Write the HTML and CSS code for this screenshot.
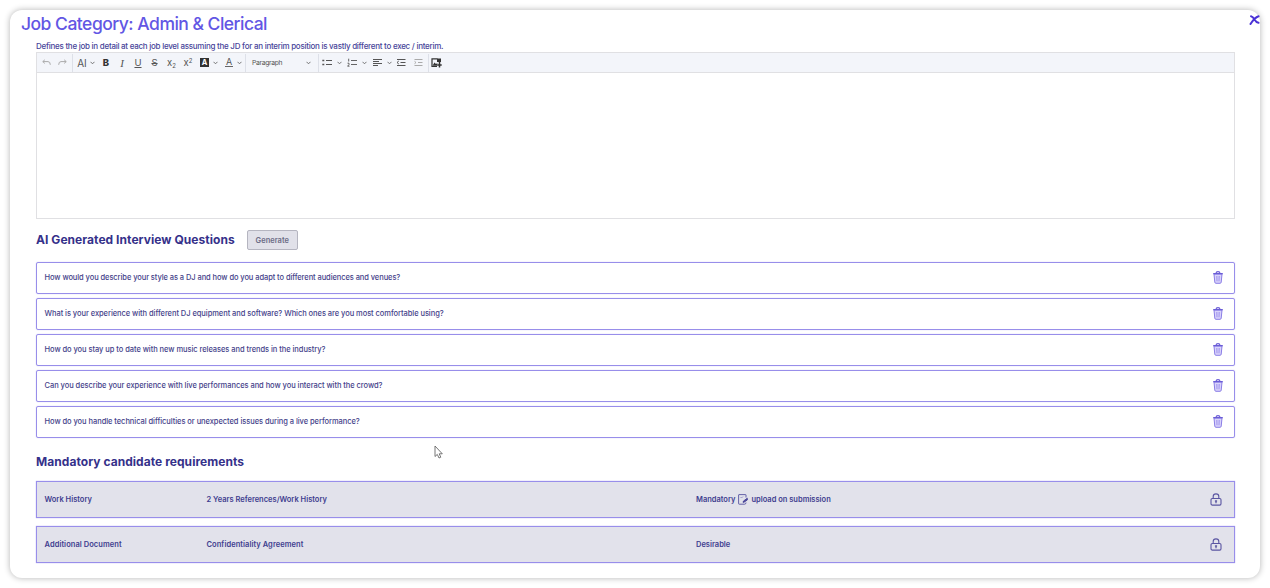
FILE: index.html
```html
<!DOCTYPE html>
<html lang="en">
<head>
<meta charset="utf-8">
<title>Job Category: Admin &amp; Clerical</title>
<link rel="stylesheet" href="styles.css">
</head>
<body>
<svg class="defs" width="0" height="0" aria-hidden="true">
  <symbol id="chev" viewBox="0 0 5 4"><path d="M.5 .8 2.5 2.8 4.500 .8" fill="none" stroke="currentColor" stroke-width=".9"/></symbol>
  <symbol id="trash" viewBox="0 0 10 13"><path d="M1 3 1.800 11.200Q1.900 12.300 3 12.300H7Q8.100 12.300 8.200 11.200L9 3Z" fill="#d9d3fb" stroke="#8a7de6"/><path d="M.2 2.700H9.800M3 2.300Q3.200.7 5 .7 6.800.7 7 2.300" fill="none" stroke="#6a5cd6" stroke-width="1.200"/><path d="M3.500 5 3.800 10.300M6.500 5 6.200 10.300M5 5V10.300" stroke="#9c90ec" stroke-width=".7"/></symbol>
  <symbol id="lock" viewBox="0 0 12 13"><path d="M3.200 5.500V3.500Q3.200.9 6 .9 8.800.9 8.800 3.500V5.500" fill="none" stroke="#5a55a2" stroke-width="1.100"/><rect x="1" y="5.500" width="10" height="6.600" rx="1.300" fill="none" stroke="#5a55a2" stroke-width="1.100"/><path d="M6 7.300V10.300M4.900 8H7.100" stroke="#4a4598" stroke-width="1.100"/></symbol>
</svg>
<main class="card">
  <header class="head">
    <h1 class="title">Job Category: Admin &amp; Clerical</h1>
    <svg class="close" viewBox="0 0 11 10"><path d="M2 1.200Q3.800 1.600 5.500 4.500T9.500 7.800M9.600 1.200Q5.500 2.500 1.500 9" fill="none" stroke="#4a32d6" stroke-width="2" stroke-linecap="round"/></svg>
  </header>
  <div class="body">
    <p class="hint">Defines the job in detail at each job level assuming the JD for an interim position is vastly different to exec / interim.</p>
    <section class="editor">
      <div class="toolbar">
        <span class="tool faint"><svg width="9" height="7" viewBox="0 0 9 7"><path d="M2.800.8.800 2.600 2.800 4.400M.8 2.600H6Q8.300 2.600 8.300 5.800" fill="none" stroke="currentColor"/></svg></span>
        <span class="tool faint"><svg width="9" height="7" viewBox="0 0 9 7"><path d="M6.200.8 8.200 2.600 6.200 4.400M8.200 2.600H3Q.7 2.600.7 5.800" fill="none" stroke="currentColor"/></svg></span>
        <i class="sep"></i>
        <span class="tool ai">AI</span><svg class="chev"><use href="#chev"/></svg>
        <span class="tool bold">B</span>
        <span class="tool italic">I</span>
        <span class="tool under">U</span>
        <span class="tool wide strike">S</span>
        <span class="tool wide">x<sub>2</sub></span>
        <span class="tool">x<sup>2</sup></span>
        <span class="tool fill"><b class="swatch">A</b></span><svg class="chev"><use href="#chev"/></svg>
        <span class="tool color"><b class="ink">A</b></span><svg class="chev"><use href="#chev"/></svg>
        <i class="sep"></i>
        <span class="style"><span class="style-name">Paragraph</span><svg class="chev"><use href="#chev"/></svg></span>
        <i class="sep"></i>
        <span class="tool bullets"><svg width="10" height="7" viewBox="0 0 10 7"><path d="M4 1.500H10M4 5.500H10" stroke="currentColor"/><path d="M.3 1.500H2.300M.3 5.500H2.300" stroke="currentColor" stroke-width="1.700"/></svg></span><svg class="chev apart"><use href="#chev"/></svg>
        <span class="tool list"><svg width="10" height="9" viewBox="0 0 10 9"><path d="M4 2.500H10M4 6.500H10M1.700.7V3.500M.5 5.200H2V6.600L.6 8.200H2.500" fill="none" stroke="currentColor" stroke-width=".9"/></svg></span><svg class="chev apart"><use href="#chev"/></svg>
        <span class="tool list"><svg width="9" height="8" viewBox="0 0 9 8"><path d="M0 .5H9M0 2.500H6M0 4.500H9M0 6.500H5" stroke="currentColor"/></svg></span><svg class="chev apart"><use href="#chev"/></svg>
        <span class="tool indent"><svg width="10" height="8" viewBox="0 0 10 8"><path d="M1 .5H9.500M4.500 3.500H9.500M1 6.500H9.500M2.800 2 1 3.500 2.800 5" fill="none" stroke="currentColor"/></svg></span>
        <span class="tool indent faint"><svg width="9" height="8" viewBox="0 0 9 8"><path d="M.5 .5H8.500M4 3.500H8.500M.5 6.500H8.500M.5 2.300 2 3.500 .5 4.700" fill="none" stroke="currentColor"/></svg></span>
        <i class="sep"></i>
        <span class="tool image"><svg width="11" height="10" viewBox="0 0 11 10"><path d="M6.500 .9H1V8.500H6" fill="none" stroke="#333" stroke-width="1.200"/><path d="M1.500 7.800 3.500 4.500 5 6 6.300 5V7.800ZM6 .5H10V4H6Z" fill="#333"/><path d="M8.500 4V9.500M6.300 7H10.700" stroke="#333" stroke-width="1.500"/></svg></span>
      </div>
      <div class="area"></div>
    </section>
    <div class="heading">
      <h2 class="h2 h2-ai">AI Generated Interview Questions</h2>
      <button class="generate">Generate</button>
    </div>
    <ul class="questions">
      <li class="question"><span class="snug">How would you describe your style as a DJ and how do you adapt to different audiences and venues?</span><svg class="trash"><use href="#trash"/></svg></li>
      <li class="question"><span>What is your experience with different DJ equipment and software? Which ones are you most comfortable using?</span><svg class="trash"><use href="#trash"/></svg></li>
      <li class="question"><span>How do you stay up to date with new music releases and trends in the industry?</span><svg class="trash"><use href="#trash"/></svg></li>
      <li class="question"><span>Can you describe your experience with live performances and how you interact with the crowd?</span><svg class="trash"><use href="#trash"/></svg></li>
      <li class="question"><span>How do you handle technical difficulties or unexpected issues during a live performance?</span><svg class="trash"><use href="#trash"/></svg></li>
    </ul>
    <h2 class="h2 h2-req">Mandatory candidate requirements</h2>
    <div class="requirements">
      <div class="req"><span>Work History</span><span>2 Years References/Work History</span><span class="status">Mandatory <svg class="doc" viewBox="0 0 10 11"><path d="M8 3.500V1Q8 .6 7.600.6H1Q.6.6.6 1V9.600Q.6 10.200 1.200 10.200H6.600Q8 10.200 8 8.500" fill="none" stroke="#5752a0" stroke-width=".9"/><path d="M2.500 3 3.500 4 5 2.500" fill="none" stroke="#8a86c0" stroke-width=".8"/><path d="M9.300 4.200V6L6 8.200 5 8.300 5.500 7Z" fill="#5752a0" stroke="#3a3590" stroke-width=".8"/></svg> upload on submission</span><svg class="lock"><use href="#lock"/></svg></div>
      <div class="req"><span class="loose">Additional Document</span><span class="loose">Confidentiality Agreement</span><span class="status">Desirable</span><svg class="lock"><use href="#lock"/></svg></div>
    </div>
  </div>
</main>
<svg class="cursor" viewBox="0 0 9 14"><path d="M1 1V11.500L3.300 9.400 5 13 6.800 12.200 5.200 8.800H8.300Z" fill="#fff" stroke="#666" stroke-width=".9"/></svg>
</body>
</html>
```
FILE: styles.css
```css
* { box-sizing: border-box; }
body {
  margin: 0;
  padding: 10px;
  height: 588px;
  overflow: hidden;
  background: #fff;
  font-family: Inter, "Liberation Sans", sans-serif;
  color: #35318a;
}
svg { display: block; flex: none; }
.defs { position: absolute; }
.card {
  height: 568px;
  width: 1250px;
  border-radius: 12px;
  background: #fff;
  box-shadow: 0 0 6px rgba(0, 0, 0, .3);
}
.head { display: flex; justify-content: space-between; height: 30px; padding-left: 11px; }
.title { margin: 0; font-size: 17.5px; line-height: 28px; font-weight: 500; color: #6256e4; white-space: nowrap; letter-spacing: -.51px; }
.close { width: 11px; height: 10px; margin: 5px 0 0; }
.body { padding: 0 25px 0 26px; }
.hint { margin: 0; height: 12px; font-size: 8px; line-height: 12px; font-weight: 500; white-space: nowrap; color: #48459a; letter-spacing: -.262px; }

.editor { height: 167px; border: 1px solid #e0e0e3; }
.toolbar {
  display: flex;
  align-items: center;
  height: 20px;
  padding-left: 1px;
  background: #f3f5fa;
  border-bottom: 1px solid #e0e0e3;
  color: #555;
  font-size: 9.5px;
}
.tool { display: flex; align-items: center; justify-content: center; width: 16px; height: 18px; flex: none; }
.faint { color: #aaa; }
.sep { width: 1px; height: 18px; margin: 0 1px 0 2px; background: #dde0e8; flex: none; }
.chev { width: 5px; height: 4px; color: #666; }
.apart { margin-left: 2px; }
.list { margin-left: 2px; }
.ai { font-size: 10px; }
.bold { margin-left: 3px; font-weight: 800; color: #333; }
.italic { font-family: "Liberation Serif", serif; font-style: italic; font-size: 11px; }
.under { text-decoration: underline; }
.wide { width: 17px; }
.strike { text-decoration: line-through; }
.tool sub, .tool sup { font-size: 6px; line-height: 1; }
.tool sub { margin-top: 6px; }
.tool sup { margin-bottom: 4px; }
.fill { width: 17px; }
.swatch { width: 9px; height: 9px; background: #333; color: #fff; font-size: 7.5px; line-height: 9px; text-align: center; }
.color { margin-left: 3px; }
.ink { width: 8px; font-weight: 400; font-size: 9px; line-height: 8px; text-align: center; border-bottom: 1px solid #666; }
.color + .chev { margin-right: 1px; }
.style { display: flex; align-items: center; justify-content: space-between; width: 69px; padding: 0 5px; }
.style-name { font-size: 6.8px; letter-spacing: -.35px; }
.bullets { margin-left: -1px; }
.indent { margin-left: 1px; }
.image { margin-left: -2px; }

.heading { display: flex; align-items: center; height: 20px; margin-top: 11px; gap: 12px; }
.h2 { margin: 0; font-size: 12px; line-height: 20px; font-weight: 700; white-space: nowrap; letter-spacing: .05px; }
.generate {
  width: 51px; height: 20px; padding: 0;
  border: 1px solid #b5b5c0; border-radius: 2px;
  background: #e1e1e9; color: #6c6c86;
  font: 600 7.5px/17px Inter, sans-serif;
}
.questions { display: flex; flex-direction: column; gap: 4px; margin: 12px 0 0; padding: 0; list-style: none; }
.question {
  display: flex; align-items: center; justify-content: space-between;
  height: 32.1px; padding: 0 11px 1px 7.500px;
  border: 1px solid #988eea; border-radius: 2px;
  font-size: 7.5px; font-weight: 500; white-space: nowrap; color: #45428a;
  letter-spacing: -.053px;
  box-shadow: 0 0 1px #a9a0f0;
}
.snug { letter-spacing: -.077px; }
.loose { letter-spacing: .06px; }
.trash { width: 10px; height: 13px; }
.h2-req { margin-top: 13.5px; }
.requirements { display: flex; flex-direction: column; gap: 8px; margin-top: 9.5px; }
.req {
  display: grid; grid-template-columns: 162px 489.500px 1fr 12px; align-items: center;
  height: 37px; padding: 0 12px 0 7.500px;
  border: 1px solid #988eea; background: #e2e2eb;
  font-size: 7.5px; font-weight: 600; white-space: nowrap; color: #403d8f;
  box-shadow: 0 0 1px #a9a0f0;
}
.status { display: flex; align-items: center; gap: 3px; }
.doc { width: 10px; height: 11px; }
.lock { width: 12px; height: 13px; }
.cursor { position: absolute; left: 434px; top: 445px; width: 9px; height: 14px; }
```
